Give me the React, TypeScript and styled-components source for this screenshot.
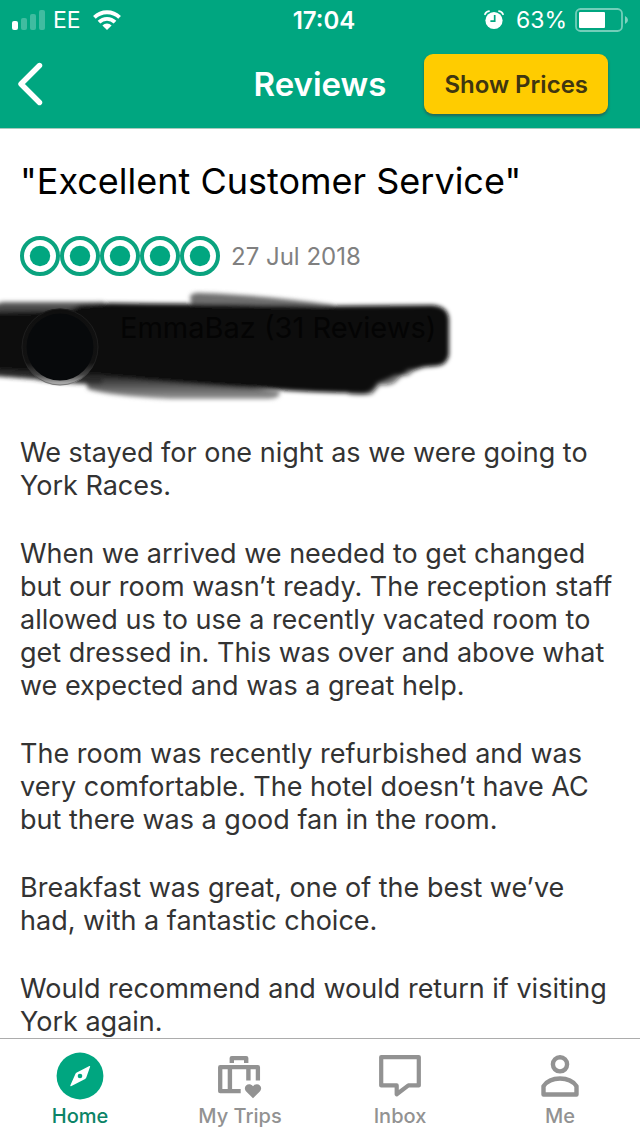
import React from "react";
import styled, { createGlobalStyle } from "styled-components";

const GREEN = "#00a680";
const GREY = "#929292";

const GlobalStyle = createGlobalStyle`
  * { box-sizing: border-box; }
  body {
    margin: 0;
    background: #fff;
    font-family: Inter, "Liberation Sans", sans-serif;
  }
`;

const Screen = styled.div`
  display: flex;
  flex-direction: column;
  height: 100vh;
`;

const Header = styled.header`
  flex: none;
  background: ${GREEN};
  color: #fff;
  border-bottom: 1px solid #a9c9bd;
`;

const StatusBar = styled.div`
  display: grid;
  grid-template-columns: 1fr auto 1fr;
  align-items: center;
  height: 40px;
  padding: 0 12px;
  font-size: 23px;
`;

const StatusGroup = styled.div<{ $end?: boolean }>`
  display: flex;
  align-items: center;
  justify-content: ${(p) => (p.$end ? "flex-end" : "flex-start")};
  gap: 8px;
`;

const Clock = styled.time`
  margin-left: 8px;
  font-size: 24px;
  font-weight: 600;
`;

const TitleBar = styled.div`
  display: grid;
  grid-template-columns: 1fr auto 1fr;
  align-items: center;
  height: 88px;
  padding: 0 0 0 16px;
`;

const BackButton = styled.button`
  justify-self: start;
  display: flex;
  padding: 0;
  border: 0;
  background: none;
  color: inherit;
`;

const Title = styled.h1`
  margin: 0 16px 0 0;
  font-size: 33px;
  font-weight: 600;
`;

const PricesButton = styled.button`
  justify-self: end;
  height: 60px;
  margin-right: 32px;
  padding: 0 20px;
  border: 0;
  border-radius: 9px;
  background: #fc0;
  box-shadow: 0 2px 3px rgba(60, 60, 60, 0.6);
  color: #3f3610;
  font: inherit;
  font-size: 24px;
  font-weight: 600;
  white-space: nowrap;
`;

const Main = styled.main`
  flex: 1;
  min-height: 0;
  overflow-y: auto;
  scrollbar-width: none;
  padding: 28px 20px 0;
`;

const ReviewTitle = styled.h2`
  margin: 0;
  font-size: 36px;
  line-height: 48px;
  font-weight: 400;
  color: #000;
`;

const RatingRow = styled.div`
  display: flex;
  align-items: center;
  gap: 11px;
  height: 40px;
  margin-top: 31px;
  font-size: 24px;
  color: #808080;
`;

const Author = styled.div`
  position: relative;
  display: flex;
  align-items: flex-start;
  gap: 20px;
  height: 80px;
  margin-top: 32px;
`;

const Scribble = styled.svg`
  position: absolute;
  left: -20px;
  top: -28px;
`;

const Avatar = styled.svg`
  position: relative;
  flex: none;
`;

const AuthorName = styled.span`
  position: relative;
  margin-top: 3px;
  font-size: 29px;
  line-height: 33px;
  color: #040404;
  white-space: nowrap;
`;

const Body = styled.div`
  display: flex;
  flex-direction: column;
  gap: 35px;
  margin-top: 48px;
  font-size: 27px;
  line-height: 33px;
  color: #333;

  p { margin: 0; }
`;

const TabBar = styled.nav`
  flex: none;
  display: grid;
  grid-template-columns: repeat(4, 1fr);
  height: 98px;
  border-top: 1px solid #acacac;
  background: #fff;
`;

const Tab = styled.a<{ $active?: boolean }>`
  display: flex;
  flex-direction: column;
  align-items: center;
  gap: 4px;
  padding-top: 13px;
  font-size: 20px;
  line-height: 24px;
  font-weight: 500;
  color: ${(p) => (p.$active ? "#0b8467" : GREY)};
  text-decoration: none;
`;

const SignalIcon = () => (
  <svg width="33" height="20" viewBox="0 0 33 20" fill="#fff" aria-hidden="true">
    <rect x="0" y="11" width="6" height="9" rx="2" />
    <g opacity=".25">
      <rect x="9" y="8" width="6" height="12" rx="2" />
      <rect x="18" y="4" width="6" height="16" rx="2" />
      <rect x="27" y="0" width="6" height="20" rx="2" />
    </g>
  </svg>
);

const WifiIcon = () => (
  <svg width="36" height="20" viewBox="-4 0 36 20" aria-hidden="true">
    <g fill="none" stroke="#fff" strokeWidth="3.8">
      <path d="M1.4 7.4a18 18 0 0 1 25.2 0" />
      <path d="M6 12.2a11.4 11.4 0 0 1 16 0" />
    </g>
    <path d="M9.4 15.4a6.6 6.6 0 0 1 9.2 0L14 20z" fill="#fff" />
  </svg>
);

const AlarmIcon = () => (
  <svg width="24" height="20" viewBox="0 0 24 20" aria-hidden="true">
    <circle cx="10" cy="10.5" r="8.6" fill="#fff" />
    <path d="M1 4.2Q2 1.6 5 1.2M19 4.2Q18 1.6 15 1.2" fill="none" stroke="#fff" strokeWidth="1.8" strokeLinecap="round" />
    <path d="M10.7 5v6.2H6.4" fill="none" stroke={GREEN} strokeWidth="1.7" />
  </svg>
);

const BatteryIcon = () => (
  <svg width="53" height="24" viewBox="0 0 53 24" aria-hidden="true">
    <rect x="1" y="1" width="46" height="22" rx="4.5" fill="none" stroke="#fff" strokeOpacity=".45" strokeWidth="1.8" />
    <rect x="4" y="4" width="26" height="16" rx="1" fill="#fff" />
    <path d="M50 8q3 1.400 3 4t-3 4z" fill="#fff" fillOpacity=".5" />
  </svg>
);

const Bubbles = () => (
  <svg width="200" height="40" viewBox="0 0 200 40" role="img" aria-label="5 of 5 bubbles">
    {[20, 60, 100, 140, 180].map((x) => (
      <g key={x}>
        <circle cx={x} cy="20" r="18" fill="#fff" stroke="#0aa37f" strokeWidth="4" />
        <circle cx={x} cy="20" r="10.200" fill={GREEN} />
      </g>
    ))}
  </svg>
);

const Marker = () => (
  <Scribble width="480" height="124" viewBox="0 280 480 124" aria-hidden="true">
    <defs>
      <filter id="soft" x="-5%" y="-20%" width="110%" height="140%">
        <feGaussianBlur stdDeviation="2.2" />
      </filter>
      <linearGradient id="fade" x1="0" y1="0" x2="0" y2="1">
        <stop offset="0" stopColor="#111" />
        <stop offset="1" stopColor="#999" />
      </linearGradient>
      <linearGradient id="shade" x1="0" y1="0" x2="0" y2="1">
        <stop offset="0" stopColor="#666" />
        <stop offset="1" stopColor="#0b0b0b" />
      </linearGradient>
    </defs>
    <g filter="url(#soft)">
      <path d="M2 302h102l6 20H-8v-16z" fill="url(#shade)" />
      <path d="M190 296q4-4 12-3 60 2 132 12l-6 5H192z" fill="#707070" />
      <path d="M82 372q60 0 198 20 0 7-12 7H170Q110 396 88 389z" fill="url(#fade)" />
      <path d="M-8 362l110 6v16Q60 384 34 379L-8 376z" fill="#2a2a2a" />
      <path d="M-8 313q40-1 76-2l12-6q16-1 30-2 110 1 210 3l112-1q16 1 17 14v36q-2 10-12 11l-12 1-18 3q-2 5-12 5l-6 3-12 5q-4 8-12 10-50 0-100-4-80-4-165-14L60 373-8 369z" fill="#0b0b0b" />
      <path d="M426 366l-14 6q-2 4-10 4l-8 7q-6 3-14 2l-8 9q-10 2-24 0l0-8 34-6 30-13z" fill="#0b0b0b" fillOpacity=".6" />
    </g>
  </Scribble>
);

const AuthorPhoto = () => (
  <Avatar width="80" height="80" viewBox="0 0 80 80" aria-hidden="true">
    <defs>
      <linearGradient id="ring" x1="0" y1="0" x2="0" y2="1">
        <stop offset="0" stopColor="#0f0f0f" />
        <stop offset=".72" stopColor="#121212" />
        <stop offset=".88" stopColor="#444" />
        <stop offset="1" stopColor="#a8a8a8" />
      </linearGradient>
    </defs>
    <circle cx="40" cy="39" r="36" fill="#07090b" stroke="url(#ring)" strokeWidth="5" />
    <circle cx="40" cy="39" r="38" fill="none" stroke="#333" strokeOpacity=".4" strokeWidth="1" />
  </Avatar>
);

const HomeIcon = () => (
  <svg width="48" height="48" viewBox="0 0 48 48" aria-hidden="true">
    <circle cx="24" cy="24" r="23.400" fill={GREEN} />
    <path d="M33.400 14.100q1-.3.700.7l-3.800 10.800q-.3.900-1.200 1.400l-13.600 6.900q-1.800.8-1-.9l5-11.300q.4-.9 1.300-1.300z" fill="#fff" />
    <circle cx="24" cy="24" r="2.300" fill={GREEN} />
  </svg>
);

const TripsIcon = () => (
  <svg width="48" height="48" viewBox="0 0 48 48" aria-hidden="true">
    <g fill="none" stroke={GREY}>
      <path d="M15.800 11V6.100h14.400V11" strokeWidth="4.400" strokeLinejoin="round" />
      <path d="M41.900 28.500V15.200H4.200v24h20.500" strokeWidth="4.300" strokeLinejoin="round" />
      <path d="M13.900 15v24M32.400 15v13.500" strokeWidth="4.400" />
    </g>
    <path d="M37 46.200l-6.800-6.700c-4.200-4.800 2.400-10.200 6.800-5.300 4.400-4.900 11 .5 6.800 5.300z" fill={GREY} />
  </svg>
);

const InboxIcon = () => (
  <svg width="48" height="48" viewBox="0 0 48 48" fill="none" aria-hidden="true">
    <path d="M5.200 5.100h37.600v28.300H32.400l-11.700 8.800v-8.800H5.200z" stroke={GREY} strokeWidth="4.200" strokeLinejoin="round" />
  </svg>
);

const MeIcon = () => (
  <svg width="48" height="48" viewBox="0 0 48 48" fill="none" stroke={GREY} strokeWidth="4.400" aria-hidden="true">
    <circle cx="24" cy="12.300" r="7.100" />
    <path d="M7.500 42.500v-8.300c7-10.200 26-10.200 33 0v8.300z" strokeLinejoin="round" />
  </svg>
);

const paragraphs = [
  "We stayed for one night as we were going to York Races.",
  "When we arrived we needed to get changed but our room wasn’t ready. The reception staff allowed us to use a recently vacated room to get dressed in. This was over and above what we expected and was a great help.",
  "The room was recently refurbished and was very comfortable. The hotel doesn’t have AC but there was a good fan in the room.",
  "Breakfast was great, one of the best we’ve had, with a fantastic choice.",
  "Would recommend and would return if visiting York again.",
];

const tabs = [
  { label: "Home", Icon: HomeIcon },
  { label: "My Trips", Icon: TripsIcon },
  { label: "Inbox", Icon: InboxIcon },
  { label: "Me", Icon: MeIcon },
];

export default function App() {
  return (
    <Screen>
      <GlobalStyle />
      <Header>
        <StatusBar>
          <StatusGroup>
            <SignalIcon />
            <span>EE</span>
            <WifiIcon />
          </StatusGroup>
          <Clock>17:04</Clock>
          <StatusGroup $end>
            <AlarmIcon />
            <span>63%</span>
            <BatteryIcon />
          </StatusGroup>
        </StatusBar>
        <TitleBar>
          <BackButton aria-label="Back">
            <svg width="28" height="44" viewBox="0 0 28 44" fill="none" aria-hidden="true">
              <path d="M23.500 3.500L5 22l18.500 18.500" stroke="#fff" strokeWidth="5.400" strokeLinecap="round" strokeLinejoin="round" />
            </svg>
          </BackButton>
          <Title>Reviews</Title>
          <PricesButton>Show Prices</PricesButton>
        </TitleBar>
      </Header>
      <Main>
        <ReviewTitle>"Excellent Customer Service"</ReviewTitle>
        <RatingRow>
          <Bubbles />
          <time dateTime="2018-07-27">27 Jul 2018</time>
        </RatingRow>
        <Author>
          <Marker />
          <AuthorPhoto />
          <AuthorName>EmmaBaz (31 Reviews)</AuthorName>
        </Author>
        <Body>
          {paragraphs.map((text) => (
            <p key={text}>{text}</p>
          ))}
        </Body>
      </Main>
      <TabBar>
        {tabs.map(({ label, Icon }, i) => (
          <Tab key={label} href="#" $active={i === 0} aria-current={i === 0 ? "page" : undefined}>
            <Icon />
            {label}
          </Tab>
        ))}
      </TabBar>
    </Screen>
  );
}
